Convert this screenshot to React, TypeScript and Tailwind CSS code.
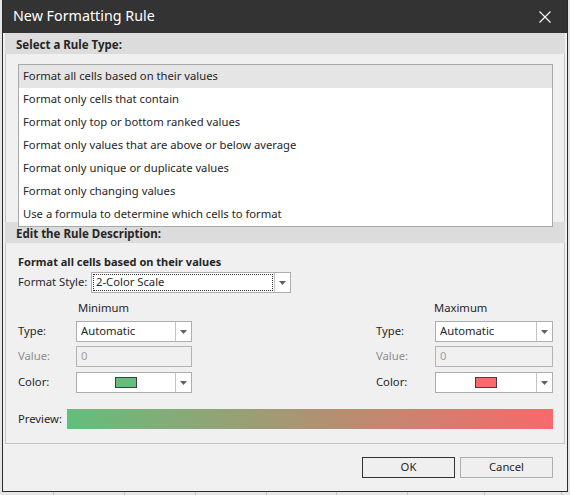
const ruleTypes = [
  'Format all cells based on their values',
  'Format only cells that contain',
  'Format only top or bottom ranked values',
  'Format only values that are above or below average',
  'Format only unique or duplicate values',
  'Format only changing values',
  'Use a formula to determine which cells to format',
]

const Arrow = () => (
  <div className="w-[16px] h-full border-l border-[#c4c4c4] flex items-center justify-center">
    <svg width="7" height="4" viewBox="0 0 7 4">
      <path d="M0 0h7L3.5 4z" fill="#606060" />
    </svg>
  </div>
)

const Combo = ({ value, width }: { value: string; width: string }) => (
  <div className={`${width} h-[21px] flex border border-[#adadad] bg-white`}>
    <div className="flex-1 flex items-center px-[4px] text-[#262626]">{value}</div>
    <Arrow />
  </div>
)

const ColorCombo = ({ color, width }: { color: string; width: string }) => (
  <div className={`${width} h-[21px] flex border border-[#adadad] bg-white`}>
    <div className="flex-1 flex items-center justify-center">
      <div className="w-[22px] h-[11px] border border-[#404040]" style={{ backgroundColor: color }} />
    </div>
    <Arrow />
  </div>
)

const ValueBox = ({ width }: { width: string }) => (
  <div className={`${width} h-[21px] flex items-center px-[4px] border border-[#b4b4b4] bg-[#f0f0f0] text-[#a0a0a0]`}>0</div>
)

type SideProps = { title: string; color: string; boxW: string; labelW: string; titlePad: string }

const Side = ({ title, color, boxW, labelW, titlePad }: SideProps) => (
  <div className="flex flex-col">
    <div className={`h-[16px] mt-[7px] ${titlePad} leading-[16px] text-[#262626]`}>{title}</div>
    <div className="flex items-center mt-[5px]">
      <span className={`${labelW} text-[#262626]`}>Type:</span>
      <Combo value="Automatic" width={boxW} />
    </div>
    <div className="flex items-center mt-[4px]">
      <span className={`${labelW} text-[#8d8d8d]`}>Value:</span>
      <ValueBox width={boxW} />
    </div>
    <div className="flex items-center mt-[5px]">
      <span className={`${labelW} text-[#262626]`}>Color:</span>
      <ColorCombo color={color} width={boxW} />
    </div>
  </div>
)

const SectionHeader = ({ text }: { text: string }) => (
  <div className="h-[21px] bg-[#dcdcdc] flex items-center pt-[3px] pl-[11px] text-[11.5px] font-bold text-[#262626]">{text}</div>
)

const GridStrip = () => (
  <div className="h-[3px] flex bg-[#e6e6e6]">
    {[54, 71, 71, 71, 70, 71, 77, 77].map((w, i) => (
      <div key={i} className="h-full border-r border-[#c8c8c8]" style={{ width: w }} />
    ))}
  </div>
)

export default function App() {
  return (
    <div className="w-[570px] h-[495px] bg-[#e6e6e6] flex flex-col overflow-hidden text-[11.25px]" style={{ fontFamily: '"Noto Sans", "Open Sans", sans-serif' }}>
      <div className="flex">
        <div className="w-[2px] bg-[#e6e6e6]" />
        <div className="w-[566px] h-[492px] flex flex-col border-x border-b border-[#2b2b2b] bg-[#f0f0f0]">
          {/* title bar */}
          <div className="h-[33px] shrink-0 bg-[#333333] flex items-center justify-between pl-[10px] pr-[16px]">
            <span className="text-white text-[14.3px] pb-[1px]">New Formatting Rule</span>
            <svg width="12" height="12" viewBox="0 0 12 12">
              <path d="M0.5 0.5l11 11M11.5 0.5l-11 11" stroke="#ffffff" strokeWidth="1.1" />
            </svg>
          </div>

          <div className="flex flex-col px-[2px]">
            <SectionHeader text="Select a Rule Type:" />
            <div className="h-[168px] border-x border-[#c4c4c4] pt-[10px] pl-[12px] pr-[11px]">
              <div className="relative z-10 bg-white border border-[#a8a8a8]">
                {ruleTypes.map((r, i) => (
                  <div key={r} className={`h-[23px] flex items-center pl-[4px] text-[#262626] ${i === 0 ? 'bg-[#e5e5e5]' : ''}`}>
                    {r}
                  </div>
                ))}
              </div>
            </div>
            <SectionHeader text="Edit the Rule Description:" />

            <div className="border-x border-b border-[#c4c4c4] pt-[11px] pb-[14px] pl-[12px] pr-[11px] flex flex-col">
              <div className="h-[16px] leading-[16px] text-[11px] font-bold text-[#262626]">Format all cells based on their values</div>
              <div className="flex items-center mt-[2px]">
                <span className="w-[73px] whitespace-nowrap text-[#262626]">Format Style:</span>
                <div className="w-[200px] h-[21px] flex border border-[#adadad] bg-white">
                  <div className="flex-1 m-[1px] flex items-center pl-[2px] border border-dotted border-[#333] text-[#262626]">2-Color Scale</div>
                  <Arrow />
                </div>
              </div>
              <div className="flex justify-between">
                <Side title="Minimum" color="#63be7b" boxW="w-[116px]" labelW="w-[58px]" titlePad="pl-[60px]" />
                <Side title="Maximum" color="#f8696b" boxW="w-[118px]" labelW="w-[59px]" titlePad="pl-[58px]" />
              </div>
              <div className="flex items-center mt-[16px]">
                <span className="w-[49px] text-[#262626]">Preview:</span>
                <div className="flex-1 h-[20px] bg-[linear-gradient(to_right,#63be7b,#f8696b)]" />
              </div>
            </div>

            <div className="flex justify-end gap-[5px] mt-[13px] pr-[12px]">
              <button className="w-[93px] h-[21px] border border-[#333] bg-[#efefef] text-[#262626]">OK</button>
              <button className="w-[93px] h-[21px] border border-[#adadad] bg-[#efefef] text-[#262626]">Cancel</button>
            </div>
          </div>
        </div>
        <div className="w-[2px] bg-[#e6e6e6]" />
      </div>
      <GridStrip />
    </div>
  )
}
